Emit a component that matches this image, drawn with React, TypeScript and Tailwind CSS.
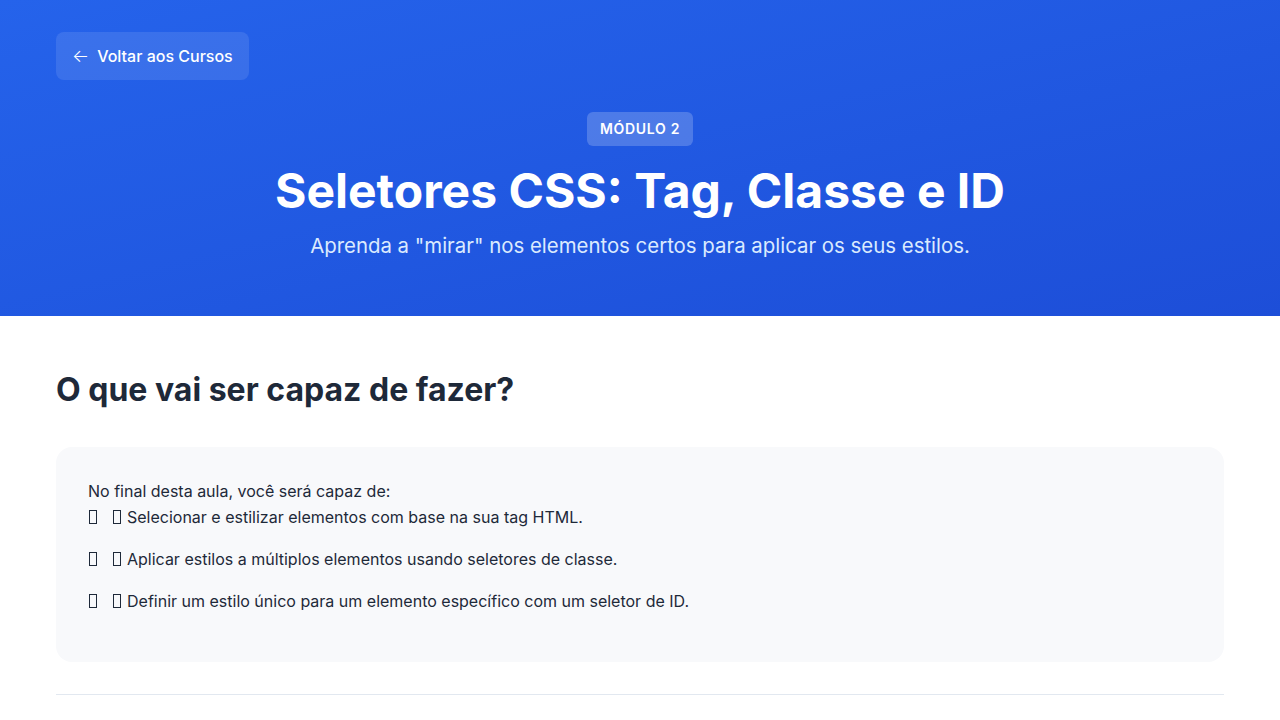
const goals = [
  'Selecionar e estilizar elementos com base na sua tag HTML.',
  'Aplicar estilos a múltiplos elementos usando seletores de classe.',
  'Definir um estilo único para um elemento específico com um seletor de ID.',
]

// missing-glyph boxes, as the original page shows them
function Tofu({ className = '' }: { className?: string }) {
  return <span className={`inline-block h-[14px] w-[8px] border border-gray-800 ${className}`} />
}

export default function App() {
  return (
    <div className="min-h-screen bg-white font-['Inter',sans-serif] text-gray-800">
      <header className="bg-gradient-to-br from-[#2563eb] to-[#1d4ed8] px-14 pt-8 pb-[55px] text-white">
        <button className="flex h-12 items-center gap-2 rounded-lg bg-white/10 px-4 text-base font-medium">
          <span className="text-lg font-light leading-none">←</span>
          Voltar aos Cursos
        </button>
        <div className="mt-8 flex flex-col items-center text-center">
          <span className="rounded-md bg-white/20 px-[13px] py-[7px] text-sm font-semibold tracking-wider">
            MÓDULO 2
          </span>
          <h1 className="mt-4 text-5xl font-bold leading-[1.2]">Seletores CSS: Tag, Classe e ID</h1>
          <p className="mt-[11px] text-[20.4px] text-blue-100">
            Aprenda a "mirar" nos elementos certos para aplicar os seus estilos.
          </p>
        </div>
      </header>

      <main className="px-14 pt-[54px]">
        <h2 className="text-[32px] font-bold leading-tight text-gray-800">O que vai ser capaz de fazer?</h2>
        <div className="mt-[37px] rounded-2xl bg-[#f8f9fb] px-8 pt-8 pb-12">
          <p className="leading-6">No final desta aula, você será capaz de:</p>
          <ul className="mt-px flex flex-col gap-4">
            {goals.map((g) => (
              <li key={g} className="flex items-center leading-[26px]">
                <Tofu className="ml-px mr-4" />
                <Tofu className="mr-[6px]" />
                <span>{g}</span>
              </li>
            ))}
          </ul>
        </div>
        <hr className="mt-8 border-slate-200" />
      </main>
    </div>
  )
}
